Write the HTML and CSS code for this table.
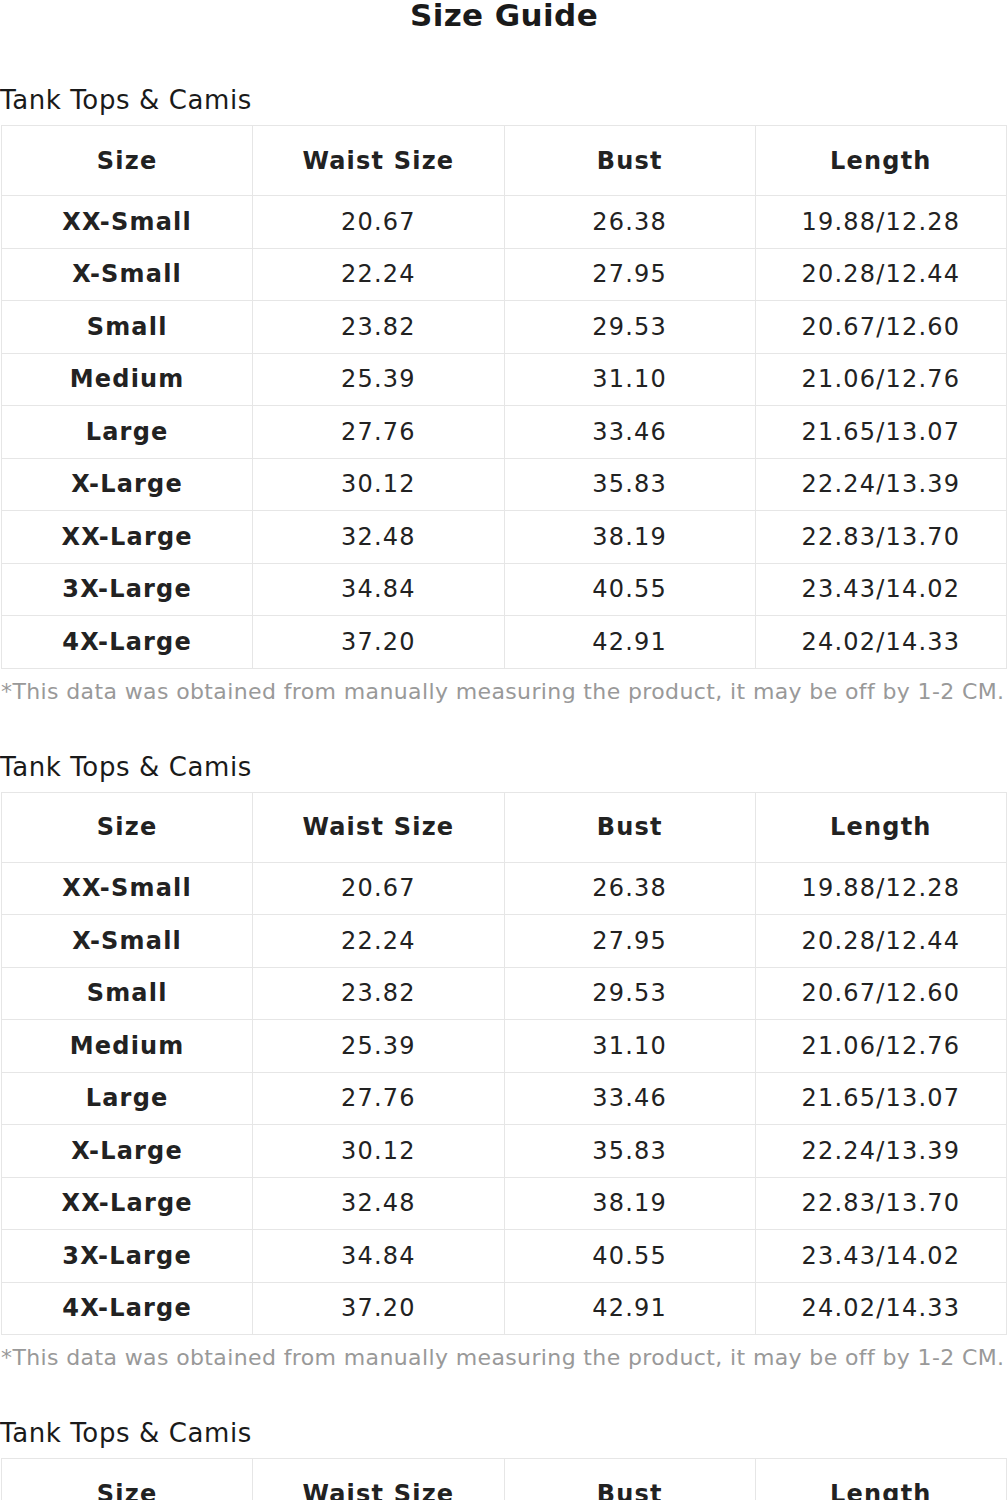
FILE: index.html
```html
<!DOCTYPE html>
<html>
<head>
<meta charset="utf-8">
<link rel="stylesheet" href="styles.css">
</head>
<body>
<div class="page">
  <h1 class="title">Size Guide</h1>

  <section class="section">
    <h2 class="cat">Tank Tops &amp; Camis</h2>
    <table class="sizes">
      <thead>
        <tr><th>Size</th><th>Waist Size</th><th>Bust</th><th>Length</th></tr>
      </thead>
      <tbody>
        <tr><td class="sz">XX-Small</td><td>20.67</td><td>26.38</td><td>19.88/12.28</td></tr>
        <tr><td class="sz">X-Small</td><td>22.24</td><td>27.95</td><td>20.28/12.44</td></tr>
        <tr><td class="sz">Small</td><td>23.82</td><td>29.53</td><td>20.67/12.60</td></tr>
        <tr><td class="sz">Medium</td><td>25.39</td><td>31.10</td><td>21.06/12.76</td></tr>
        <tr><td class="sz">Large</td><td>27.76</td><td>33.46</td><td>21.65/13.07</td></tr>
        <tr><td class="sz">X-Large</td><td>30.12</td><td>35.83</td><td>22.24/13.39</td></tr>
        <tr><td class="sz">XX-Large</td><td>32.48</td><td>38.19</td><td>22.83/13.70</td></tr>
        <tr><td class="sz">3X-Large</td><td>34.84</td><td>40.55</td><td>23.43/14.02</td></tr>
        <tr><td class="sz">4X-Large</td><td>37.20</td><td>42.91</td><td>24.02/14.33</td></tr>
      </tbody>
    </table>
    <p class="note">*This data was obtained from manually measuring the product, it may be off by 1-2 CM.</p>
  </section>

  <section class="section">
    <h2 class="cat">Tank Tops &amp; Camis</h2>
    <table class="sizes">
      <thead>
        <tr><th>Size</th><th>Waist Size</th><th>Bust</th><th>Length</th></tr>
      </thead>
      <tbody>
        <tr><td class="sz">XX-Small</td><td>20.67</td><td>26.38</td><td>19.88/12.28</td></tr>
        <tr><td class="sz">X-Small</td><td>22.24</td><td>27.95</td><td>20.28/12.44</td></tr>
        <tr><td class="sz">Small</td><td>23.82</td><td>29.53</td><td>20.67/12.60</td></tr>
        <tr><td class="sz">Medium</td><td>25.39</td><td>31.10</td><td>21.06/12.76</td></tr>
        <tr><td class="sz">Large</td><td>27.76</td><td>33.46</td><td>21.65/13.07</td></tr>
        <tr><td class="sz">X-Large</td><td>30.12</td><td>35.83</td><td>22.24/13.39</td></tr>
        <tr><td class="sz">XX-Large</td><td>32.48</td><td>38.19</td><td>22.83/13.70</td></tr>
        <tr><td class="sz">3X-Large</td><td>34.84</td><td>40.55</td><td>23.43/14.02</td></tr>
        <tr><td class="sz">4X-Large</td><td>37.20</td><td>42.91</td><td>24.02/14.33</td></tr>
      </tbody>
    </table>
    <p class="note">*This data was obtained from manually measuring the product, it may be off by 1-2 CM.</p>
  </section>

  <section class="section">
    <h2 class="cat">Tank Tops &amp; Camis</h2>
    <table class="sizes">
      <thead>
        <tr><th>Size</th><th>Waist Size</th><th>Bust</th><th>Length</th></tr>
      </thead>
      <tbody>
        <tr><td class="sz">XX-Small</td><td>20.67</td><td>26.38</td><td>19.88/12.28</td></tr>
        <tr><td class="sz">X-Small</td><td>22.24</td><td>27.95</td><td>20.28/12.44</td></tr>
        <tr><td class="sz">Small</td><td>23.82</td><td>29.53</td><td>20.67/12.60</td></tr>
      </tbody>
    </table>
  </section>
</div>
</body>
</html>
```

FILE: styles.css
```css
html, body {
  margin: 0;
  padding: 0;
  background: #ffffff;
}

.page {
  font-family: "DejaVu Sans", sans-serif;
  color: #222222;
  padding: 0 1px;
}

.title {
  margin: 0;
  padding-top: 1px;
  text-align: center;
  font-size: 31px;
  font-weight: bold;
  line-height: 28px;
  letter-spacing: 0.4px;
  color: #1a1a1a;
}

.cat {
  margin: 0 0 0 -1px;
  font-size: 26px;
  font-weight: normal;
  line-height: 30px;
  padding-top: 56px;
  padding-bottom: 10px;
  color: #1a1a1a;
  letter-spacing: 0.6px;
}

.section + .section .cat {
  padding-top: 46px;
}

.sizes {
  width: 100%;
  border-collapse: collapse;
  table-layout: fixed;
}

.sizes th,
.sizes td {
  border: 1px solid #e6e6e6;
  text-align: center;
  padding: 0;
  font-size: 24px;
  letter-spacing: 1.2px;
  color: #222222;
}

.sizes th {
  height: 69px;
  font-weight: bold;
}

.sizes td {
  height: 51.5px;
}

.sizes td.sz {
  font-weight: bold;
}

.note {
  margin: 9px 0 0 0;
  font-size: 22px;
  line-height: 28px;
  color: #999999;
  letter-spacing: 0.38px;
  white-space: nowrap;
}
```
